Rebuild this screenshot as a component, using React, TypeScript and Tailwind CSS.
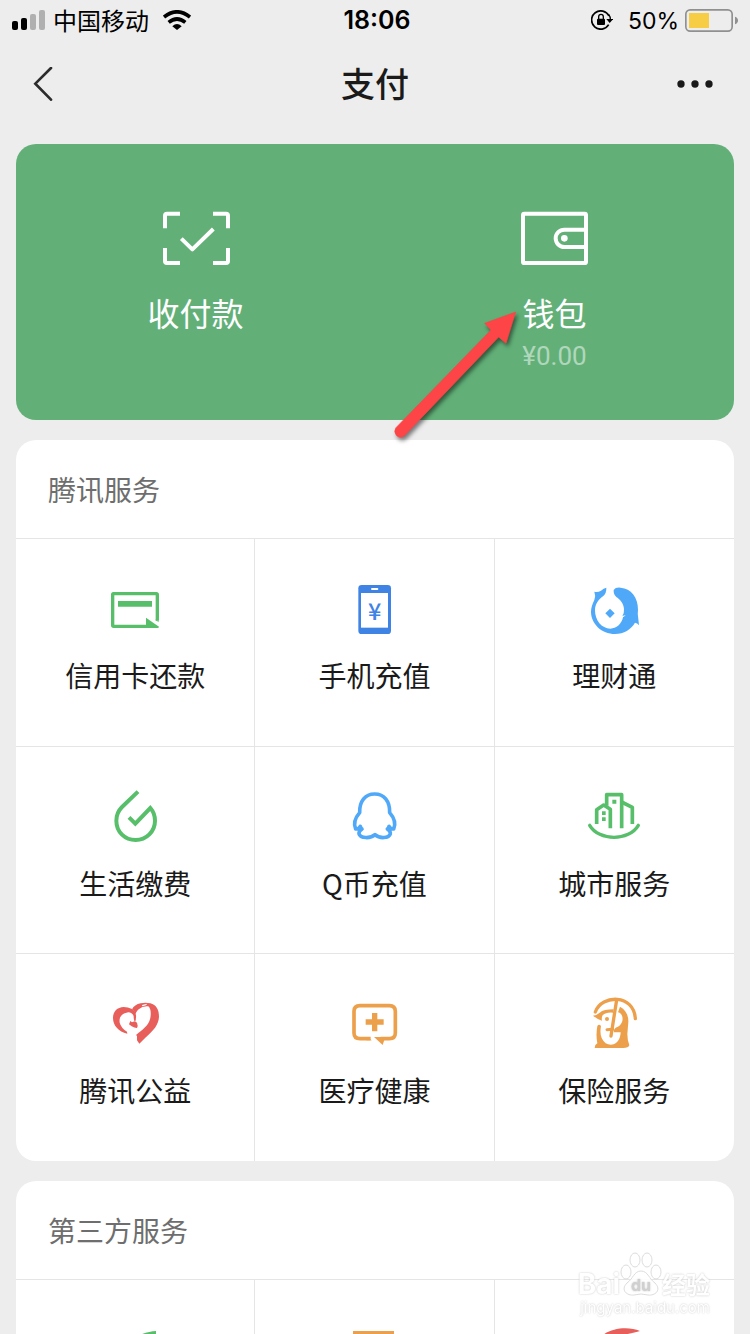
// Payment hub: wallet card on top, then the service grids.
import type { ReactNode } from 'react';

type Service = { id: string; label?: string; icon: ReactNode };

function Icon({ viewBox, children }: { viewBox: string; children: ReactNode }) {
  return (
    <svg viewBox={viewBox} className="h-14 w-14 shrink-0" fill="none" aria-hidden>
      {children}
    </svg>
  );
}

const GREEN = '#57be6a';
const BLUE = '#3f83e4';
const SKY = '#50a9f8';
const RED = '#e85e5b';
const ORANGE = '#eda04c';

const TENCENT: Service[] = [
  {
    id: 'credit-card',
    label: '信用卡还款',
    icon: (
      <Icon viewBox="171 33 168 168">
        <path d="M322 152V74Q322 71 319 71H190Q188 71 188 74V166Q188 169 191 169H292" stroke={GREEN} strokeWidth="10" />
        <path d="M204 93H306V110H204Z" fill={GREEN} />
        <path d="M288 143L327 170Q327 174 322 174H288Z" fill={GREEN} />
        <path d="M317 148L327 155V157L317 151Z" fill={GREEN} />
      </Icon>
    ),
  },
  {
    id: 'mobile',
    label: '手机充值',
    icon: (
      <Icon viewBox="19 33 168 168">
        <rect x="56" y="45" width="98" height="147" rx="10" fill={BLUE} />
        <rect x="64" y="69" width="81" height="104" fill="#fff" />
        <rect x="94" y="54" width="22" height="6" rx="3" fill="#fff" />
        <text x="105" y="149" textAnchor="middle" fill={BLUE} fontSize="70" fontWeight="500" fontFamily="Noto Sans CJK SC, sans-serif">
          ¥
        </text>
      </Icon>
    ),
  },
  {
    id: 'wealth',
    label: '理财通',
    icon: (
      <Icon viewBox="33 18 168 168">
        <path
          d="M58 50Q68 53 78 47Q86 40 94 38Q95 54 84 64C70 74 60 88 60 106C60 136 80 161 106 161C124 161 140 147 144 127L152 121Q146 121 142 124Q148 114 147 102C146 86 136 74 124 66Q115 58 116 45Q122 36 137 38C168 40 190 68 189 105Q187 118 190 132L192 151Q187 144 180 143C168 163 147 177 120 177C80 177 48 146 48 110Q48 95 58 75Q63 62 58 50Z"
          fill={SKY}
        />
        <path d="M105 101L119 115L105 129L91 115Z" fill={SKY} />
      </Icon>
    ),
  },
  {
    id: 'utilities',
    label: '生活缴费',
    icon: (
      <Icon viewBox="36 27 168 168">
        <path d="M129 35L81 81C68 94 64 106 64 122C64 156 90 180 122 180C154 180 180 154 180 122C180 106 174 93 166 84L121 131L102 112" stroke={GREEN} strokeWidth="12" />
      </Icon>
    ),
  },
  {
    id: 'q-coin',
    label: 'Q币充值',
    icon: (
      <Icon viewBox="34 27 168 168">
        <path
          d="M121 164C108 176 77 176 73 161Q72 154 82 147Q78 144 77 139Q73 148 63 147C56 131 62 113 75 98C74 64 91 42 120 42C149 42 166 64 165 98C178 113 184 131 177 147Q167 148 163 139Q162 144 158 147Q168 154 167 161C163 176 134 176 121 164Z"
          stroke={SKY}
          strokeWidth="11"
          strokeLinejoin="round"
        />
      </Icon>
    ),
  },
  {
    id: 'city',
    label: '城市服务',
    icon: (
      <Icon viewBox="33 27 168 168">
        <g stroke={GREEN} strokeWidth="11" strokeLinejoin="round">
          <path d="M65 132V89L86 75L106 88V145" />
          <path d="M95 77V44H140V145" />
          <path d="M140 66L172 82V132" />
          <path d="M44 136C72 184 162 184 190 136" strokeWidth="10" strokeLinecap="round" />
        </g>
        <path d="M112 59H124V71H112ZM81 94H92V105H81ZM81 112H92V123H81Z" fill={GREEN} />
      </Icon>
    ),
  },
  {
    id: 'charity',
    label: '腾讯公益',
    icon: (
      <Icon viewBox="36 18 168 168">
        <path
          d="M97 131C70 125 54 106 54 84C54 64 67 52 86 51Q99 51 111 57Q121 63 123 76Q124 87 120 97Q115 87 116 78Q109 64 94 68C78 71 72 84 74 98Q79 115 96 125Z"
          fill={RED}
        />
        <path
          d="M111 58Q118 44 137 40Q151 37 166 40C184 44 192 60 192 80C191 105 174 123 151 143L133 161L126 151V138L123 135C142 120 160 107 165 88C169 71 168 56 160 49Q143 47 131 58Q124 64 121 72Q119 63 111 58Z"
          fill={RED}
        />
        <path d="M106 93L111 97Q118 91 126 98Q130 108 126 114Q118 114 110 109L102 103Z" fill={RED} />
        <path d="M141 45L157 41L153 46L142 49Z" fill="#fff" />
      </Icon>
    ),
  },
  {
    id: 'health',
    label: '医疗健康',
    icon: (
      <Icon viewBox="754 18 168 168">
        <path d="M828 146H796Q778 146 778 129V64Q778 47 796 47H884Q902 47 902 64V129Q902 146 884 146H858" stroke={ORANGE} strokeWidth="11" />
        <path d="M815 141L832 151H815ZM838 141H872L864 165Z" fill={ORANGE} />
        <path d="M840 69V124M813 96H867" stroke={ORANGE} strokeWidth="16" />
      </Icon>
    ),
  },
  {
    id: 'insurance',
    label: '保险服务',
    icon: (
      <Icon viewBox="78 33 168 168">
        <path d="M106 81C125 28 222 26 226 101" stroke={ORANGE} strokeWidth="10" strokeLinecap="round" />
        <path d="M170 44L153 153" stroke={ORANGE} strokeWidth="10" strokeLinecap="round" />
        <path
          d="M99 92Q110 91 119 83Q131 73 161 73L159 83Q138 81 128 91Q124 98 126 107Q112 103 99 92Z"
          fill={ORANGE}
        />
        <circle cx="141" cy="102" r="6" fill={ORANGE} />
        <path d="M141 134L158 133" stroke={ORANGE} strokeWidth="9" strokeLinecap="round" />
        <path
          d="M180 65C197 74 206 90 205 112L202 147Q202 165 208 181Q205 189 190 189H104Q104 179 112 175Q107 150 112 123Q117 116 123 123C119 146 122 163 137 175Q148 181 161 178C178 171 181 155 182 142H162Q160 133 167 128C184 123 190 108 187 95Q184 84 174 82Z"
          fill={ORANGE}
        />
      </Icon>
    ),
  },
];

const THIRD_PARTY: Service[] = [
  {
    id: 'travel',
    icon: (
      <Icon viewBox="0 0 56 56">
        <path d="M49 9C36 10 18 17 18 31C18 42 26 47 34 45C46 42 49 26 49 9Z" fill={GREEN} />
      </Icon>
    ),
  },
  {
    id: 'shopping',
    icon: (
      <Icon viewBox="0 0 56 56">
        <rect x="9" y="11" width="37" height="34" stroke={ORANGE} strokeWidth="4" />
      </Icon>
    ),
  },
  {
    id: 'deals',
    icon: (
      <Icon viewBox="0 0 56 56">
        <path d="M14 16C22 6 42 4 54 9C46 12 30 12 24 22Z" fill={RED} />
      </Icon>
    ),
  },
];

function StatusBar() {
  return (
    <div className="grid h-10 grid-cols-[1fr_auto_1fr] items-center px-3 text-black">
      <div className="flex items-center">
        <svg viewBox="36 30 99 60" className="h-5 w-[33px]" aria-hidden>
          <rect x="36" y="63" width="18" height="27" rx="6" />
          <rect x="63" y="54" width="18" height="36" rx="6" />
          <rect x="90" y="42" width="18" height="48" rx="6" fill="#b0b0b0" />
          <rect x="117" y="30" width="18" height="60" rx="6" fill="#b0b0b0" />
        </svg>
        <span className="ml-2 text-2xl">中国移动</span>
        <svg viewBox="489 30 84 60" className="ml-3.5 h-5 w-7" fill="none" stroke="#000" strokeWidth="11" aria-hidden>
          <path d="M492 51Q531 20 570 51" />
          <path d="M506 67Q531 47 556 67" />
          <path d="M517 79Q531 65 545 79L531 90Z" fill="#000" stroke="none" />
        </svg>
      </div>
      <time className="pt-0.5 pl-1 font-[Inter,sans-serif] text-[25px] font-semibold">18:06</time>
      <div className="flex items-center justify-end">
        <svg viewBox="99 30 66 60" className="h-5 w-[22px]" fill="none" stroke="#000" aria-hidden>
          <path d="M153 48A27.500 27.500 0 1 0 152 74" strokeWidth="5" />
          <path d="M152 43Q157 50 157 57" strokeWidth="4" />
          <path d="M145 57H166L155 69Z" fill="#000" stroke="none" />
          <rect x="117" y="56" width="24" height="19" rx="3" fill="#000" stroke="none" />
          <path d="M122 57V50Q122 43 129 43Q136 43 136 50V57" strokeWidth="4" />
        </svg>
        <span className="ml-[15px] pt-0.5 font-[Inter,sans-serif] text-[23px]">50%</span>
        <svg viewBox="378 27 159 69" className="ml-[6px] h-[23px] w-[53px]" aria-hidden>
          <rect x="380.500" y="29.500" width="139" height="64" rx="13" fill="none" stroke="#909090" strokeWidth="5" />
          <rect x="390" y="39" width="60" height="45" fill="#f8cd46" />
          <path d="M528 50Q537 53 537 61.500Q537 70 528 73Z" fill="#909090" />
        </svg>
      </div>
    </div>
  );
}

function NavBar() {
  return (
    <header className="grid h-[88px] grid-cols-[1fr_auto_1fr] items-center px-[33px]">
      <button type="button" aria-label="返回" className="justify-self-start">
        <svg viewBox="99 201 60 102" className="h-[34px] w-5" fill="none" stroke="#2c2c2c" strokeWidth="8" aria-hidden>
          <path d="M153 204L106 251L153 299" strokeLinecap="round" />
        </svg>
      </button>
      <h1 className="pb-1 text-[34px] font-medium">支付</h1>
      <button type="button" aria-label="更多" className="justify-self-end pr-1">
        <svg viewBox="348 240 108 24" className="h-2 w-9" fill="#191919" aria-hidden>
          <circle cx="360" cy="252" r="11" />
          <circle cx="402" cy="252" r="11" />
          <circle cx="444" cy="252" r="11" />
        </svg>
      </button>
    </header>
  );
}

function WalletCard() {
  return (
    <section className="relative grid grid-cols-2 items-start rounded-[20px] bg-[#62b078] pt-[66px] pb-12 text-white">
      <button type="button" className="flex flex-col items-center">
        <svg viewBox="93 60 204 168" className="h-14 w-[68px]" fill="none" stroke="#fff" strokeWidth="12" aria-hidden>
          <path d="M147 71H108Q102 71 102 77V115M246 71H285Q291 71 291 77V115M147 219H108Q102 219 102 213V174M246 219H285Q291 219 291 213V174" />
          <path d="M151 146L184 178L247 117" strokeLinejoin="round" />
        </svg>
        <span className="mt-[26px] text-[32px] leading-10">收付款</span>
      </button>
      <button type="button" className="flex flex-col items-center">
        <svg viewBox="423 60 204 168" className="h-14 w-[68px]" fill="none" stroke="#fff" strokeWidth="12" aria-hidden>
          <rect x="429" y="71" width="189" height="148" rx="4" />
          <path d="M618 119H553A26 26 0 0 0 553 171H618" />
          <circle cx="553" cy="145" r="10" fill="#fff" stroke="none" />
        </svg>
        <span className="mt-[26px] text-[32px] leading-10">钱包</span>
        <span className="mt-2 font-[Roboto,sans-serif] text-[26px] leading-8 text-white/50">¥0.00</span>
      </button>
      <svg
        viewBox="30 345 420 420"
        className="pointer-events-none absolute top-[161px] left-1/2 z-10 ml-[15px] h-[140px] w-[140px] drop-shadow-[2px_3px_2px_rgba(0,0,0,0.5)]"
        fill="#fd4446"
        aria-hidden
      >
        <path d="M407 366L378 460L356 441L73 737Q60 747 49 736Q40 725 48 713L333 420L314 400Z" stroke="#fd4446" strokeWidth="2" />
      </svg>
    </section>
  );
}

function ServiceSection({ title, services }: { title: string; services: Service[] }) {
  return (
    <section className="shrink-0 overflow-hidden rounded-[20px] bg-white">
      <h2 className="flex h-[98px] items-center px-8 text-[28px] text-[#6e6e6e]">{title}</h2>
      <div className="grid grid-cols-3 grid-rows-[208px_207px_208px]">
        {services.map(({ id, label, icon }) => (
          <button
            key={id}
            type="button"
            aria-label={label ?? id}
            className="flex flex-col items-center border-t border-r border-[#e5e5e5] pt-[42px] nth-[3n]:border-r-0"
          >
            {icon}
            {label && <span className="mt-[18px] text-[28px] leading-10">{label}</span>}
          </button>
        ))}
      </div>
    </section>
  );
}

function Watermark() {
  return (
    <div className="pointer-events-none absolute right-10 bottom-[18px] flex flex-col items-end font-[Inter,sans-serif] text-white opacity-90 [text-shadow:0_0_2px_#bbb]">
      <div className="flex items-center text-[28px] leading-8 font-bold">
        <span>Bai</span>
        <svg viewBox="0 0 42 44" className="-mt-5 h-11 w-[42px]" fill="#fff" stroke="#d8d8d8" aria-hidden>
          <ellipse cx="6" cy="20" rx="5" ry="7" />
          <ellipse cx="15" cy="8" rx="5" ry="7" />
          <ellipse cx="27" cy="8" rx="5" ry="7" />
          <ellipse cx="36" cy="20" rx="5" ry="7" />
          <path d="M21 19C28 19 29 27 35 31C42 38 35 44 28 43Q21 41 14 43C7 44 0 38 7 31C13 27 14 19 21 19Z" />
          <text x="21" y="39" textAnchor="middle" fontSize="16" fontWeight="700" fill="#ccc" stroke="none">
            du
          </text>
        </svg>
        <span className="font-['Noto_Sans_CJK_SC',sans-serif] text-2xl">经验</span>
      </div>
      <span className="text-[15px] leading-4">jingyan.baidu.com</span>
    </div>
  );
}

export default function App() {
  return (
    <div className="relative h-screen overflow-hidden bg-[#ededed] font-['Noto_Sans_CJK_SC',sans-serif] text-[#1a1a1a]">
      <StatusBar />
      <NavBar />
      <main className="flex flex-col gap-5 px-4 pt-4">
        <WalletCard />
        <ServiceSection title="腾讯服务" services={TENCENT} />
        <ServiceSection title="第三方服务" services={THIRD_PARTY} />
      </main>
      <Watermark />
    </div>
  );
}
